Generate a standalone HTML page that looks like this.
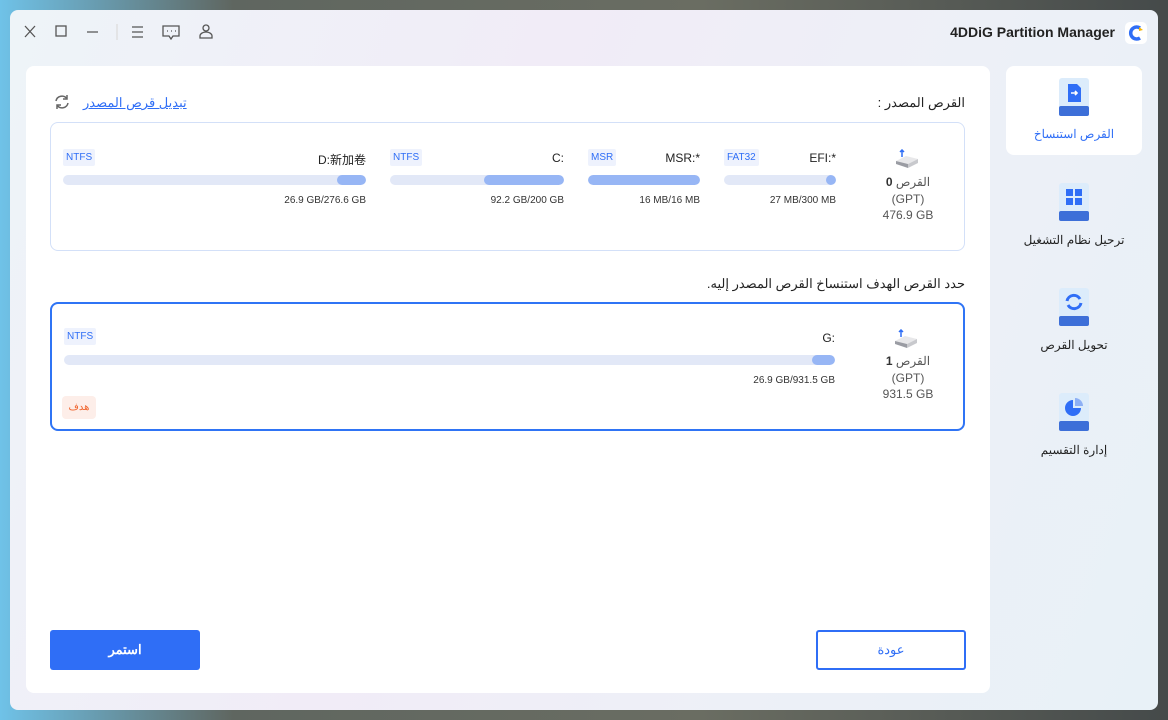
<!DOCTYPE html>
<html><head><meta charset="utf-8"><style>
*{box-sizing:border-box;margin:0;padding:0}
body{width:1168px;height:720px;overflow:hidden;position:relative;font-family:"Liberation Sans","Noto Sans CJK SC",sans-serif;background:linear-gradient(90deg,#6fc2e8 0,#5f6660 20%,#6a6d62 60%,#454a4a 100%)}
.win{position:absolute;left:10px;top:10px;width:1148px;height:700px;border-radius:8px;background:linear-gradient(110deg,#eef4f8 0%,#f1ecf7 40%,#edf0f7 70%,#e8f1f7 100%);overflow:hidden}
.a{position:absolute}
.main{left:16px;top:56px;width:964px;height:627px;background:#fff;border-radius:8px}
.side{left:996px;top:56px;width:136px;height:89px;background:#fff;border-radius:8px}
.t{position:absolute;white-space:nowrap;color:#222;font-size:12px;direction:rtl}
.box{position:absolute;left:50px;width:915px;height:129px;border:1px solid #d3e0f8;border-radius:8px}
.bar{position:absolute;height:10px;border-radius:5px;background:#e2e8f7;overflow:hidden}
.bar i{position:absolute;right:0;top:0;bottom:0;background:#97b6f5;border-radius:5px}
.tag{position:absolute;height:17px;padding:0 3px;background:#eef2fd;color:#2f6ef6;font-size:10px;line-height:17px;border-radius:2px}
.sz{position:absolute;font-size:10px;color:#333;text-align:right}
.nm{position:absolute;font-size:12px;color:#222;text-align:right;white-space:nowrap}
.dk{position:absolute;text-align:center;font-size:12px;color:#555;line-height:16.5px;width:80px}
.si{position:absolute;width:32px;height:40px}
.sl{position:absolute;width:136px;text-align:center;font-size:12px;color:#222;left:1006px}
</style></head><body>
<div class="win">
 <svg class="a" style="left:14px;top:14px" width="210" height="16" viewBox="0 0 210 16" fill="none" stroke="#555" stroke-width="1.3">
  <path d="M1 2l10 11M11 2L1 13"/>
  <rect x="32" y="2" width="10" height="10"/>
  <path d="M63 8h11"/>
  <path d="M93 -2v22" stroke="#ddd"/>
  <path d="M108 3h11M108 8h11M108 13h11"/>
  <path d="M139 2h16v10h-6l-2 3-2-3h-6z"/><path d="M143 7h1M147 7h1M151 7h1"/>
  <circle cx="182" cy="4" r="3"/><path d="M176 14v-2a6 4 0 0112 0v2z"/>
 </svg>
 <div class="a" style="right:43px;top:14px;font-size:14px;font-weight:bold;color:#222">4DDiG Partition Manager</div>
 <svg class="a" style="left:1115px;top:12px" width="22" height="22" viewBox="0 0 22 22"><rect width="22" height="22" rx="5" fill="#fff"/><path d="M15 6a6 6 0 100 10" stroke="#2f6ef6" stroke-width="3.5" fill="none"/><path d="M14 5l4 3-4 1z" fill="#f5b400"/></svg>
 <div class="a main"></div>
 <div class="a side"></div>
</div>
<svg class="si" style="left:1058px;top:78px" viewBox="0 0 32 40"><rect x="1" y="0" width="30" height="34" rx="3" fill="#dcecfb"/><rect x="1" y="28" width="30" height="10" rx="2" fill="#3d6fd8"/><path d="M10 6h9l4 4v14H10z" fill="#2f6ef6"/><path d="M13 15h6m-2-2l2 2-2 2" stroke="#fff" stroke-width="1.6" fill="none"/></svg>
<div class="sl" style="top:127px;color:#2f6ef6">القرص استنساخ</div>
<svg class="si" style="left:1058px;top:183px" viewBox="0 0 32 40"><rect x="1" y="0" width="30" height="34" rx="3" fill="#dcecfb"/><rect x="1" y="28" width="30" height="10" rx="2" fill="#3d6fd8"/><rect x="8" y="6" width="7" height="7" fill="#2f6ef6"/><rect x="17" y="6" width="7" height="7" fill="#2f6ef6"/><rect x="8" y="15" width="7" height="7" fill="#2f6ef6"/><rect x="17" y="15" width="7" height="7" fill="#2f6ef6"/></svg>
<div class="sl" style="top:233px">ترحيل نظام التشغيل</div>
<svg class="si" style="left:1058px;top:288px" viewBox="0 0 32 40"><rect x="1" y="0" width="30" height="34" rx="3" fill="#dcecfb"/><rect x="1" y="28" width="30" height="10" rx="2" fill="#3d6fd8"/><path d="M9 13a7 7 0 0113-2M23 15a7 7 0 01-13 2" stroke="#2f6ef6" stroke-width="3" fill="none"/></svg>
<div class="sl" style="top:338px">تحويل القرص</div>
<svg class="si" style="left:1058px;top:393px" viewBox="0 0 32 40"><rect x="1" y="0" width="30" height="34" rx="3" fill="#dcecfb"/><rect x="1" y="28" width="30" height="10" rx="2" fill="#3d6fd8"/><path d="M15 7a8 8 0 108 8h-8z" fill="#2f6ef6"/><path d="M17 5v8h8a8 8 0 00-8-8z" fill="#8db0f5"/></svg>
<div class="sl" style="top:443px">إدارة التقسيم</div>

<div class="t" style="right:203px;top:95px;font-size:13px">القرص المصدر :</div>
<svg class="a" style="left:53px;top:94px" width="18" height="16" viewBox="0 0 18 16" fill="none" stroke="#666" stroke-width="1.5"><path d="M3 7a6 6 0 0111-2M15 9a6 6 0 01-11 2"/><path d="M14 1v4h-4M4 15v-4h4"/></svg>
<div class="t" style="left:83px;top:95px;font-size:13px;color:#2f6ef6;text-decoration:underline">تبديل قرص المصدر</div>
<div class="box" style="top:122px"></div>
<svg class="a" style="left:894px;top:149px" width="26" height="20" viewBox="0 0 26 20"><path d="M2 12l10-5 12 3-10 5z" fill="#e8e8ea"/><path d="M2 12v3l12 4v-4z" fill="#9a9ca3"/><path d="M14 15v4l10-5v-4z" fill="#c8c9cd"/><path d="M8 1v7M6 3l2-2 2 2" stroke="#2f6ef6" stroke-width="1.5" fill="none"/></svg>
<div class="dk" style="left:868px;top:174px">القرص <b style="color:#333">0</b><br>(GPT)<br>476.9 GB</div>
<div class="tag" style="left:724px;top:149px">FAT32</div><div class="nm" style="right:332px;top:151px">EFI:*</div>
<div class="bar" style="left:724px;top:175px;width:112px"><i style="width:10px"></i></div><div class="sz" style="right:332px;top:195px">27 MB/300 MB</div>
<div class="tag" style="left:588px;top:149px">MSR</div><div class="nm" style="right:468px;top:151px">MSR:*</div>
<div class="bar" style="left:588px;top:175px;width:112px"><i style="width:112px"></i></div><div class="sz" style="right:468px;top:195px">16 MB/16 MB</div>
<div class="tag" style="left:390px;top:149px">NTFS</div><div class="nm" style="right:604px;top:151px">C:</div>
<div class="bar" style="left:390px;top:175px;width:174px"><i style="width:80px"></i></div><div class="sz" style="right:604px;top:195px">92.2 GB/200 GB</div>
<div class="tag" style="left:63px;top:149px">NTFS</div><div class="nm" style="right:802px;top:151px">D:新加卷</div>
<div class="bar" style="left:63px;top:175px;width:303px"><i style="width:29px"></i></div><div class="sz" style="right:802px;top:195px">26.9 GB/276.6 GB</div>

<div class="t" style="right:203px;top:276px;font-size:13px">حدد القرص الهدف استنساخ القرص المصدر إليه.</div>
<div class="box" style="top:302px;border:2px solid #2f74f5"></div>
<svg class="a" style="left:893px;top:329px" width="26" height="20" viewBox="0 0 26 20"><path d="M2 12l10-5 12 3-10 5z" fill="#e8e8ea"/><path d="M2 12v3l12 4v-4z" fill="#9a9ca3"/><path d="M14 15v4l10-5v-4z" fill="#c8c9cd"/><path d="M8 1v7M6 3l2-2 2 2" stroke="#2f6ef6" stroke-width="1.5" fill="none"/></svg>
<div class="dk" style="left:868px;top:353px">القرص <b style="color:#333">1</b><br>(GPT)<br>931.5 GB</div>
<div class="tag" style="left:64px;top:328px">NTFS</div><div class="nm" style="right:333px;top:331px">G:</div>
<div class="bar" style="left:64px;top:355px;width:771px"><i style="width:23px"></i></div><div class="sz" style="right:333px;top:375px">26.9 GB/931.5 GB</div>
<div class="a" style="left:62px;top:396px;width:34px;height:23px;background:#fdeee9;border-radius:4px;color:#f0642d;font-size:10px;text-align:center;line-height:23px">هدف</div>

<div class="a" style="left:50px;top:630px;width:150px;height:40px;background:#2f6ef6;border-radius:3px;color:#fff;font-size:13px;font-weight:bold;text-align:center;line-height:40px">استمر</div>
<div class="a" style="left:816px;top:630px;width:150px;height:40px;border:2px solid #2f6ef6;border-radius:3px;color:#2f6ef6;font-size:13px;text-align:center;line-height:36px">عودة</div>
</body></html>
